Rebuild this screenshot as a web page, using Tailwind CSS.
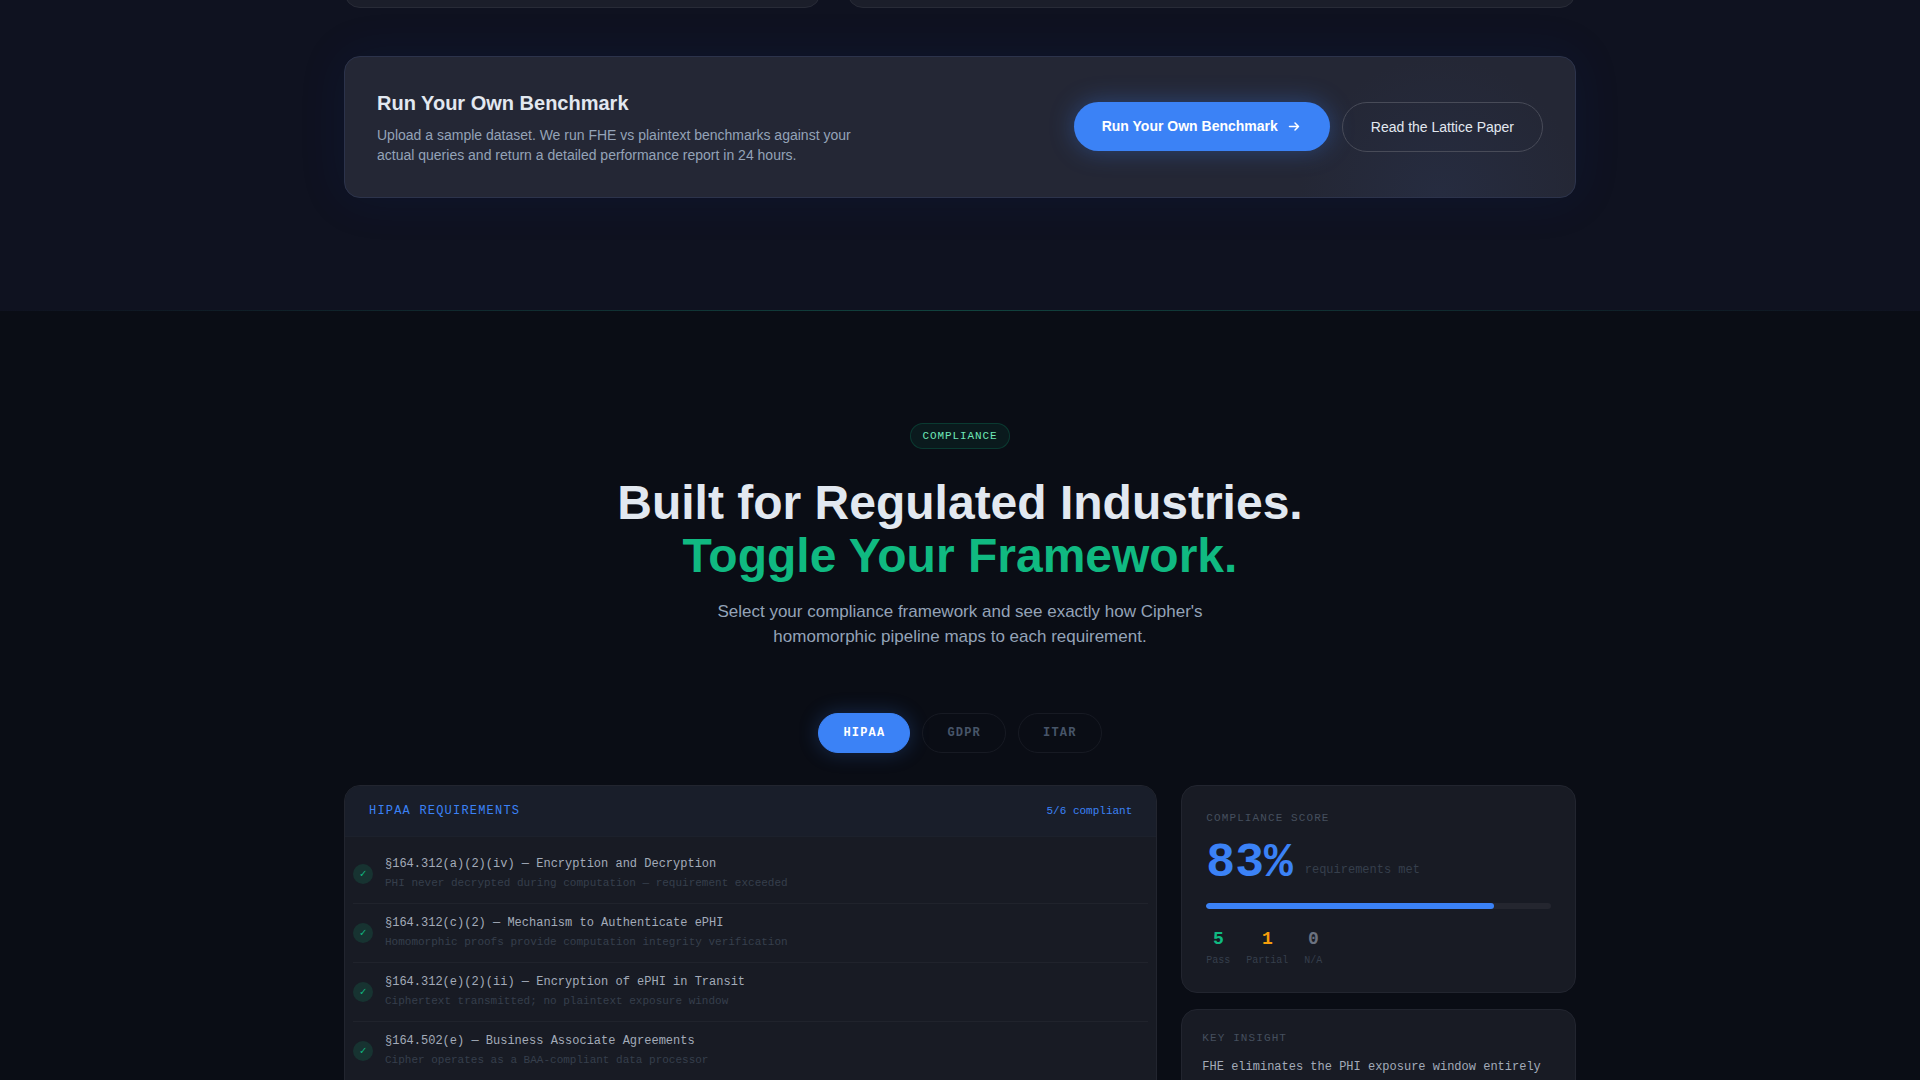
<!DOCTYPE html>
<html lang="en">
<head>
<meta charset="utf-8">
<title>Cipher</title>
<script src="https://cdn.jsdelivr.net/npm/@tailwindcss/browser@4"></script>
</head>
<body class="h-screen overflow-hidden bg-[#0a0d15] font-['Liberation_Sans',Arial,sans-serif] text-[#e2e8f0]">
<section class="overflow-hidden bg-[#0f1220] pb-28">
  <div class="mx-auto max-w-[1280px] px-6">
    <div class="-mt-14 grid grid-cols-[477fr_729fr] gap-[26px]">
      <div class="h-16 rounded-2xl border border-[#282b37] bg-[#1b1e2a]"></div>
      <div class="h-16 rounded-2xl border border-[#282b37] bg-[#1b1e2a]"></div>
    </div>
    <div class="mt-12 flex items-center justify-between rounded-2xl border border-[#2c334b] bg-[#242735] bg-[radial-gradient(circle_at_89%_100%,#262c40_0,#242735_140px)] p-8 shadow-[0_0_48px_rgba(10,50,150,0.12)]">
      <div class="max-w-[480px]">
        <h3 class="text-xl leading-7 font-bold">Run Your Own Benchmark</h3>
        <p class="mt-2 text-sm leading-5 text-[#94a3b8]">Upload a sample dataset. We run FHE vs plaintext benchmarks against your actual queries and return a detailed performance report in 24 hours.</p>
      </div>
      <div class="flex items-start gap-3">
        <button class="flex h-[49px] items-center gap-2 rounded-full bg-[#3b82f6] px-7 pb-px text-sm font-bold text-white shadow-[0_0_24px_rgba(59,130,246,0.35)]">Run Your Own Benchmark
          <svg class="size-4" viewBox="0 0 16 16" fill="none" stroke="currentColor" stroke-width="1.5" stroke-linecap="round" stroke-linejoin="round"><path d="M3.500 8.500h9M9 5l3.500 3.500L9 12"/></svg>
        </button>
        <a href="#paper" class="flex h-[50px] items-center rounded-full border border-[#484b58] px-7 text-sm">Read the Lattice Paper</a>
      </div>
    </div>
  </div>
</section>
<section>
  <div class="h-px bg-[linear-gradient(90deg,#0f1220,#11433e,#0f1220)]"></div>
  <div class="mx-auto max-w-[1280px] px-6 pt-28">
    <div class="flex flex-col items-center text-center">
      <span class="flex h-[26px] items-center rounded-full border border-[#10b981]/20 bg-[#10b981]/8 px-3 font-['Liberation_Mono',monospace] text-[11px] tracking-[0.08em] text-[#6ee7b7]">COMPLIANCE</span>
      <h2 class="mt-[27px] text-5xl leading-[53px] font-bold">Built for Regulated Industries.<br><span class="text-[#10b981]">Toggle Your Framework.</span></h2>
      <p class="mt-[17px] max-w-[520px] text-[17px] leading-[25px] text-[#94a3b8]">Select your compliance framework and see exactly how Cipher's homomorphic pipeline maps to each requirement.</p>
      <div class="mt-16 flex gap-3 font-['Liberation_Mono',monospace] text-xs font-bold tracking-widest">
        <button class="h-10 rounded-full border border-[#3b82f6] bg-[#3b82f6] px-6 text-white shadow-[0_0_20px_rgba(59,130,246,0.25)]">HIPAA</button>
        <button class="h-10 rounded-full border border-[#171a23] px-6 text-[#475569]">GDPR</button>
        <button class="h-10 rounded-full border border-[#171a23] px-6 text-[#475569]">ITAR</button>
      </div>
    </div>
    <div class="mt-8 grid grid-cols-12 gap-6 font-['Liberation_Mono',monospace]">
      <div class="col-span-8 overflow-hidden rounded-2xl border border-[#22252f] bg-[#181b24]">
        <div class="flex items-center justify-between border-b border-[#1c212c] bg-[#191e2a] px-6 py-4">
          <h3 class="text-xs leading-[18px] tracking-widest text-[#3b82f6]">HIPAA REQUIREMENTS</h3>
          <span class="text-[11px] leading-[18px] text-[#3b82f6]">5/6 compliant</span>
        </div>
        <ul class="px-2 pt-2">
          <li class="flex items-center gap-3 border-b border-[#20232c] py-3">
            <span class="flex size-5 items-center justify-center rounded-full bg-[#173331] text-[11px] text-[#10b981]">✓</span>
            <div><p class="text-xs leading-[15px] text-[#a3abb9]">§164.312(a)(2)(iv) — Encryption and Decryption</p><p class="mt-[3px] text-[11px] leading-4 text-[#363f4c]">PHI never decrypted during computation — requirement exceeded</p></div>
          </li>
          <li class="flex items-center gap-3 border-b border-[#20232c] py-3">
            <span class="flex size-5 items-center justify-center rounded-full bg-[#173331] text-[11px] text-[#10b981]">✓</span>
            <div><p class="text-xs leading-[15px] text-[#a3abb9]">§164.312(c)(2) — Mechanism to Authenticate ePHI</p><p class="mt-[3px] text-[11px] leading-4 text-[#363f4c]">Homomorphic proofs provide computation integrity verification</p></div>
          </li>
          <li class="flex items-center gap-3 border-b border-[#20232c] py-3">
            <span class="flex size-5 items-center justify-center rounded-full bg-[#173331] text-[11px] text-[#10b981]">✓</span>
            <div><p class="text-xs leading-[15px] text-[#a3abb9]">§164.312(e)(2)(ii) — Encryption of ePHI in Transit</p><p class="mt-[3px] text-[11px] leading-4 text-[#363f4c]">Ciphertext transmitted; no plaintext exposure window</p></div>
          </li>
          <li class="flex items-center gap-3 border-b border-[#20232c] py-3">
            <span class="flex size-5 items-center justify-center rounded-full bg-[#173331] text-[11px] text-[#10b981]">✓</span>
            <div><p class="text-xs leading-[15px] text-[#a3abb9]">§164.502(e) — Business Associate Agreements</p><p class="mt-[3px] text-[11px] leading-4 text-[#363f4c]">Cipher operates as a BAA-compliant data processor</p></div>
          </li>
          <li class="h-16"></li>
        </ul>
      </div>
      <div class="col-span-4 flex flex-col gap-4">
        <div class="rounded-2xl border border-[#22252f] bg-[#181b24] p-6">
          <h3 class="text-[11px] leading-[17px] tracking-widest text-[#454f5e]">COMPLIANCE SCORE</h3>
          <div class="mt-3 flex items-end gap-3">
            <span class="text-5xl leading-none font-bold text-[#3b82f6]">83%</span>
            <span class="mb-2 text-xs leading-[18px] text-[#363f4c]">requirements met</span>
          </div>
          <div class="mt-4 h-1.5 overflow-hidden rounded-full bg-[#24262f]"><div class="h-full rounded-full bg-[#3b82f6]" style="width:83.5%"></div></div>
          <dl class="mt-4 flex gap-4 text-center text-[10px] leading-[15px] text-[#363f4c]">
            <div class="flex flex-col-reverse"><dt>Pass</dt><dd class="text-lg leading-7 font-bold text-[#10b981]">5</dd></div>
            <div class="flex flex-col-reverse"><dt>Partial</dt><dd class="text-lg leading-7 font-bold text-[#f59e0b]">1</dd></div>
            <div class="flex flex-col-reverse"><dt>N/A</dt><dd class="text-lg leading-7 font-bold text-[#6b7280]">0</dd></div>
          </dl>
        </div>
        <div class="flex-1 rounded-2xl border border-[#22252f] bg-[#181b24] p-5">
          <h3 class="text-[11px] leading-[17px] tracking-widest text-[#454f5e]">KEY INSIGHT</h3>
          <p class="mt-2.5 text-xs leading-5 text-[#a3abb9]">FHE eliminates the PHI exposure window entirely</p>
        </div>
      </div>
    </div>
  </div>
</section>
</body>
</html>
